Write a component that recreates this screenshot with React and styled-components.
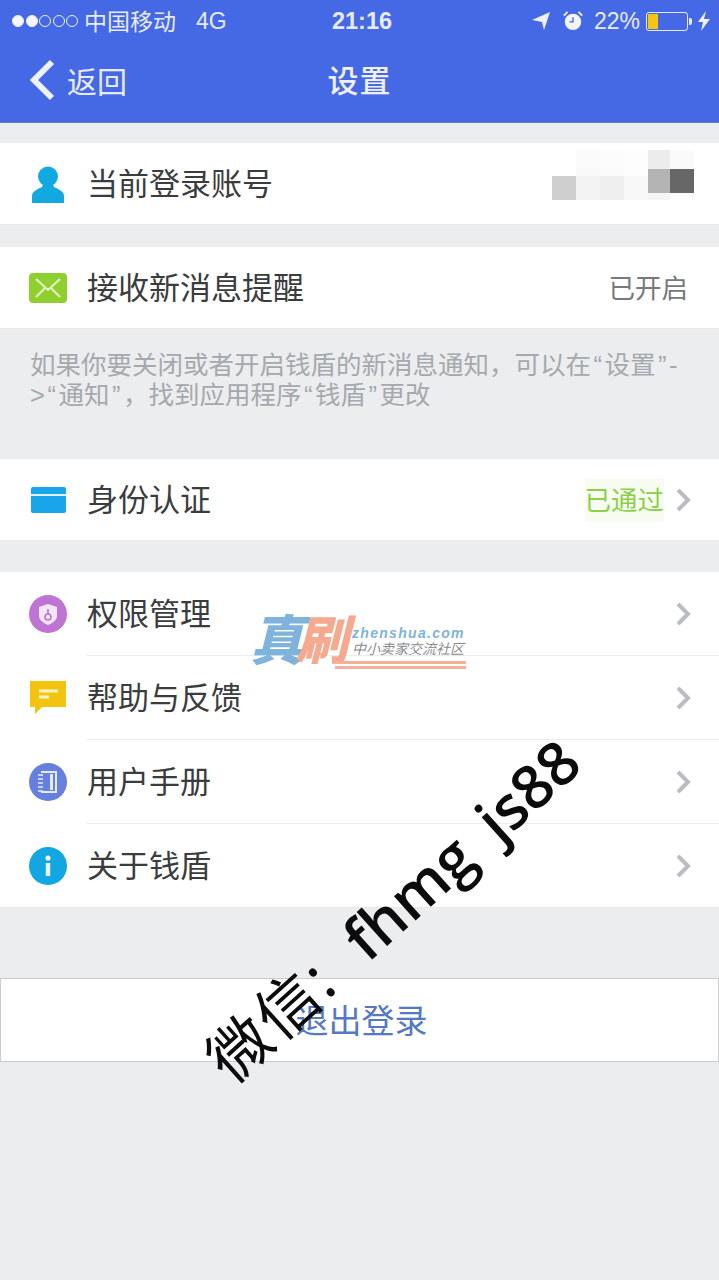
import React from "react";
import styled, { createGlobalStyle } from "styled-components";

const CJK = `"Noto Sans CJK SC", "Noto Sans", sans-serif`;

const Global = createGlobalStyle`
  html, body { margin: 0; padding: 0; background: #ebedef; }
  * { box-sizing: border-box; }
`;

const Page = styled.div`
  position: relative;
  width: 719px;
  height: 1280px;
  overflow: hidden;
  background: #ebedef;
  font-family: ${CJK};
`;

const Header = styled.header`
  height: 123px;
  background: #4568e5;
  color: #e6ebf9;
  display: flex;
  flex-direction: column;
  border-bottom: 1px solid #5f7ee0;
`;

const StatusBar = styled.div`
  height: 40px;
  padding: 0 9px 0 12px;
  display: grid;
  grid-template-columns: 1fr auto 1fr;
  align-items: center;
  font-size: 23px;
`;

const StatusLeft = styled.div`
  display: flex;
  align-items: center;
  gap: 6px;
  font-weight: 400;
  line-height: 36px;
  padding-bottom: 3px;
`;

const Dots = styled.div`
  display: flex;
  gap: 1.5px;
  margin-top: 3px;
`;

const Dot = styled.span`
  width: 12px;
  height: 12px;
  border-radius: 50%;
  border: 1px solid #eef1fb;
  background: ${(p) => (p.$on ? "#f4f6fd" : "transparent")};
`;

const Network = styled.span`
  margin-left: 14px;
  margin-top: 3px;
  font-family: "Liberation Sans", sans-serif;
  font-size: 23px;
`;

const Time = styled.div`
  font-family: "Liberation Sans", sans-serif;
  font-size: 23.5px;
  font-weight: 700;
  margin-left: 2px;
`;

const StatusRight = styled.div`
  display: flex;
  align-items: center;
  justify-content: flex-end;
  font-family: "Liberation Sans", sans-serif;
  font-size: 23px;
`;

const Percent = styled.span`
  margin: 0 6px 0 11px;
`;

const Battery = styled.div`
  position: relative;
  width: 42px;
  height: 19px;
  border: 1px solid #e6ebf9;
  border-radius: 3px;
  padding: 1px;
  margin-right: 10px;
  &::before {
    content: "";
    display: block;
    width: 10px;
    height: 15px;
    background: #f6c512;
  }
  &::after {
    content: "";
    position: absolute;
    right: -5px;
    top: 5px;
    width: 3px;
    height: 7px;
    background: #e6ebf9;
    border-radius: 0 2px 2px 0;
  }
`;

const AlarmIcon = styled.svg`
  margin-left: 13px;
`;

const NavBar = styled.div`
  flex: 1;
  position: relative;
  display: flex;
  align-items: center;
  justify-content: center;
  padding-bottom: 5px;
`;

const Back = styled.div`
  position: absolute;
  left: 29px;
  top: 18px;
  display: flex;
  align-items: center;
  gap: 11px;
  font-size: 30px;
  font-weight: 400;
  line-height: 44px;
`;

const Title = styled.div`
  font-size: 31px;
  font-weight: 500;
  letter-spacing: 1px;
  color: #eef1fb;
`;

const Section = styled.section`
  background: #fff;
  margin-top: ${(p) => p.$top}px;
  box-shadow: inset 0 -1px 0 #e7e9eb;
`;

const Row = styled.div`
  height: ${(p) => p.$h || 82}px;
  display: flex;
  align-items: center;
  padding-left: 29px;
`;

const IconSlot = styled.div`
  width: 38px;
  height: 38px;
  flex: none;
  display: flex;
  align-items: center;
  justify-content: center;
`;

const Body = styled.div`
  flex: 1;
  height: 100%;
  margin-left: 20px;
  padding-right: 28px;
  display: flex;
  align-items: center;
  border-bottom: ${(p) => (p.$line ? "1px solid #e9ebed" : "none")};
`;

const Label = styled.div`
  flex: 1;
  font-size: 31px;
  color: #3a3c3e;
  font-weight: 400;
  padding-bottom: 5px;
`;

const Value = styled.div`
  font-size: 26.5px;
  padding-bottom: 4px;
  color: ${(p) => (p.$ok ? "#8bd04a" : "#77797c")};
  background: ${(p) => (p.$ok ? "#f8fcf0" : "transparent")};
  margin-right: ${(p) => (p.$ok ? 11 : 3)}px;
`;

const Mosaic = styled.div`
  display: grid;
  grid-template-columns: 24px 24px 24px 24px 22px 24px;
  grid-template-rows: 19px 7px 17px 7px;
  margin: 0 -3px 18px 0;
`;

const Cell = styled.div`
  background: ${(p) => p.$c};
`;

const Note = styled.div`
  height: 130px;
  padding: 21px 0 0 30px;
  font-family: "Liberation Sans", "Noto Sans CJK SC", sans-serif;
  font-size: 25.5px;
  line-height: 30px;
  color: #a6a9ac;
  white-space: nowrap;
`;

const Quote = styled.span`
  margin: 0 2.5px;
`;

const Logout = styled.button`
  display: block;
  width: 100%;
  height: 84px;
  margin-top: 70px;
  padding: 0 0 3px 4px;
  background: #fff;
  border: 1px solid #c9cbce;
  font-family: ${CJK};
  font-size: 33px;
  color: #5578c4;
`;

const Stamp = styled.div`
  position: absolute;
  left: 250px;
  top: 610px;
  width: 216px;
  height: 60px;
  display: flex;
`;

const StampGlyph = styled.span`
  font-size: ${(p) => p.$size}px;
  line-height: 54px;
  font-weight: 900;
  font-style: italic;
  color: ${(p) => p.$c};
  margin-right: ${(p) => p.$gap || 0}px;
  flex: none;
`;

const StampText = styled.div`
  display: flex;
  flex-direction: column;
  margin: 16px 0 0 -13px;
  padding-left: 17px;
  height: 43px;
  flex: 1;
  border-bottom: 8px double #f5b09a;
`;

const StampUrl = styled.span`
  font-family: "Liberation Sans", sans-serif;
  font-size: 14px;
  line-height: 15px;
  letter-spacing: 1.3px;
  font-weight: 700;
  font-style: italic;
  color: #7fb3dc;
  white-space: nowrap;
`;

const StampSub = styled.span`
  font-size: 14px;
  line-height: 15px;
  color: #8b8d90;
  white-space: nowrap;
  font-style: italic;
`;

const Mark = styled.div`
  position: absolute;
  left: 216px;
  top: 1033px;
  transform-origin: 0 50%;
  transform: rotate(-42deg);
  font-family: "Noto Sans", "Noto Sans CJK SC", sans-serif;
  font-size: 62px;
  line-height: 70px;
  letter-spacing: 2px;
  color: #0c0c0c;
  white-space: nowrap;
`;

const MarkLatin = styled.span`
  font-family: "Open Sans", sans-serif;
  font-size: 60px;
  font-weight: 600;
  letter-spacing: 0;
  word-spacing: 12px;
  margin-left: 36px;
`;

const Chevron = () => (
  <svg width="16" height="26" viewBox="0 0 16 26">
    <path d="M3 3l10 10L3 23" fill="none" stroke="#b9bdc1" strokeWidth="4" />
  </svg>
);

const icons = {
  user: (
    <svg width="32" height="37" viewBox="0 0 32 37">
      <circle cx="16" cy="10.5" r="10" fill="#12a9e0" />
      <path d="M0 37v-7c0-5 6-7 10-9l1-3h10l1 3c4 2 10 4 10 9v7z" fill="#12a9e0" />
    </svg>
  ),
  mail: (
    <svg width="38" height="30" viewBox="0 0 38 30">
      <rect width="38" height="30" rx="4" fill="#8fd02f" />
      <path d="M7 6l12 11L31 6M7 24l9-9M31 24l-9-9" fill="none" stroke="#e3f5c8" strokeWidth="2" />
    </svg>
  ),
  card: (
    <svg width="35" height="26" viewBox="0 0 35 26">
      <rect width="35" height="26" rx="2" fill="#18a5ea" />
      <rect y="7" width="35" height="2" fill="#dff3fd" />
    </svg>
  ),
  shield: (
    <svg width="38" height="38" viewBox="0 0 38 38">
      <circle cx="19" cy="19" r="19" fill="#bd74d3" />
      <path d="M19 9l9 3v9c0 4-4 7-9 9-5-2-9-5-9-9v-9z" fill="#f3e4f8" />
      <circle cx="19" cy="22" r="3" fill="none" stroke="#bd74d3" strokeWidth="1.6" />
      <path d="M19 19v-5" stroke="#bd74d3" strokeWidth="1.6" />
    </svg>
  ),
  chat: (
    <svg width="36" height="34" viewBox="0 0 36 34">
      <path d="M0 0h36v26H12l-7 7v-7H0z" fill="#f2c40f" />
      <path d="M9 10h19M9 16h10" stroke="#fdf3c4" strokeWidth="3" />
    </svg>
  ),
  book: (
    <svg width="38" height="38" viewBox="0 0 38 38">
      <circle cx="19" cy="19" r="19" fill="#6580de" />
      <path d="M12 9h15v20H12" fill="none" stroke="#e6ebfb" strokeWidth="2" />
      <path d="M9 12h5M9 16h5M9 20h5M9 24h5M9 28h5" stroke="#e6ebfb" strokeWidth="1.6" />
      <rect x="21" y="11" width="3" height="16" fill="#e6ebfb" />
    </svg>
  ),
  info: (
    <svg width="38" height="38" viewBox="0 0 38 38">
      <circle cx="19" cy="19" r="19" fill="#12a6e3" />
      <circle cx="19" cy="11" r="2.6" fill="#eaf8fe" />
      <rect x="16.8" y="16" width="4.4" height="13" fill="#eaf8fe" />
    </svg>
  ),
};

const mosaic = [
  "#fff", "#fbfbfb", "#fcfcfc", "#fdfdfd", "#ececec", "#fafafa",
  "#fff", "#f8f8f8", "#fafafa", "#fdfdfd", "#b4b4b4", "#676767",
  "#cfcfcf", "#f3f3f3", "#efefef", "#f8f8f8", "#b4b4b4", "#676767",
  "#cfcfcf", "#f3f3f3", "#efefef", "#f8f8f8", "#f5f5f5", "#fbfbfb",
];

const menu = [
  { icon: "shield", label: "权限管理" },
  { icon: "chat", label: "帮助与反馈" },
  { icon: "book", label: "用户手册" },
  { icon: "info", label: "关于钱盾" },
];

export default function App() {
  return (
    <Page>
      <Global />
      <Header>
        <StatusBar>
          <StatusLeft>
            <Dots>
              {[1, 1, 0, 0, 0].map((on, i) => (
                <Dot key={i} $on={on} />
              ))}
            </Dots>
            中国移动
            <Network>4G</Network>
          </StatusLeft>
          <Time>21:16</Time>
          <StatusRight>
            <svg width="18" height="18" viewBox="0 0 18 18">
              <path d="M0 8L18 0l-6 18-2-8z" fill="#eef1fb" />
            </svg>
            <AlarmIcon width="20" height="22" viewBox="0 0 22 22">
              <circle cx="11" cy="12" r="9" fill="#f2f4fc" />
              <path d="M11 7v5H7" fill="none" stroke="#4568e5" strokeWidth="1.5" />
              <path d="M1 5l4-4M21 5l-4-4" stroke="#f2f4fc" strokeWidth="2" />
            </AlarmIcon>
            <Percent>22%</Percent>
            <Battery />
            <svg width="12" height="20" viewBox="0 0 12 20">
              <path d="M8 0L0 11h5l-2 9 9-12H6z" fill="#eef1fb" />
            </svg>
          </StatusRight>
        </StatusBar>
        <NavBar>
          <Back>
            <svg width="27" height="42" viewBox="0 0 27 42">
              <path d="M23 3L5 21l18 18" fill="none" stroke="#eef1fb" strokeWidth="6" />
            </svg>
            返回
          </Back>
          <Title>设置</Title>
        </NavBar>
      </Header>

      <Section $top={20}>
        <Row>
          <IconSlot>{icons.user}</IconSlot>
          <Body>
            <Label>当前登录账号</Label>
            <Mosaic>
              {mosaic.map((c, i) => (
                <Cell key={i} $c={c} />
              ))}
            </Mosaic>
          </Body>
        </Row>
      </Section>

      <Section $top={22}>
        <Row>
          <IconSlot>{icons.mail}</IconSlot>
          <Body>
            <Label>接收新消息提醒</Label>
            <Value>已开启</Value>
          </Body>
        </Row>
      </Section>

      <Note>
        如果你要关闭或者开启钱盾的新消息通知，可以在<Quote>“</Quote>设置<Quote>”</Quote>-
        <br />
        &gt;<Quote>“</Quote>通知<Quote>”</Quote>，找到应用程序<Quote>“</Quote>钱盾<Quote>”</Quote>更改
      </Note>

      <Section $top={0}>
        <Row>
          <IconSlot>{icons.card}</IconSlot>
          <Body>
            <Label>身份认证</Label>
            <Value $ok>已通过</Value>
            <Chevron />
          </Body>
        </Row>
      </Section>

      <Section $top={31}>
        {menu.map((m, i) => (
          <Row key={m.icon} $h={84}>
            <IconSlot>{icons[m.icon]}</IconSlot>
            <Body $line={i < menu.length - 1}>
              <Label>{m.label}</Label>
              <Chevron />
            </Body>
          </Row>
        ))}
      </Section>

      <Logout>退出登录</Logout>

      <Stamp>
        <StampGlyph $size={54} $c="#7fb3dc" $gap={-8}>真</StampGlyph>
        <StampGlyph $size={52} $c="#f5a98f">刷</StampGlyph>
        <StampText>
          <StampUrl>zhenshua.com</StampUrl>
          <StampSub>中小卖家交流社区</StampSub>
        </StampText>
      </Stamp>

      <Mark>微信:<MarkLatin>fhmg js88</MarkLatin></Mark>
    </Page>
  );
}
